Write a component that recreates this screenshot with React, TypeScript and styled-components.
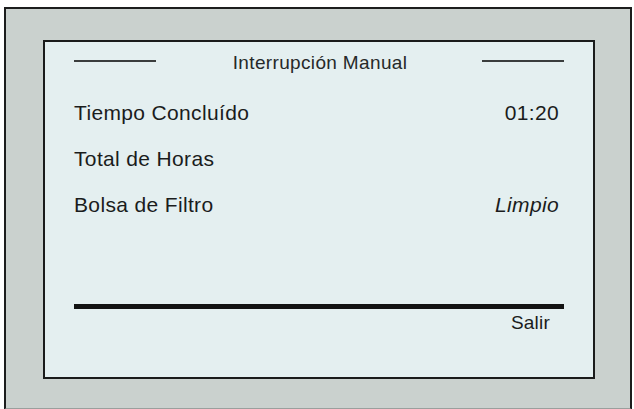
import styled, { createGlobalStyle } from 'styled-components';

const GlobalStyle = createGlobalStyle`
    html, body {
        margin: 0;
        padding: 0;
        background: #ffffff;
        overflow: hidden;
    }
    body {
        font-family: 'Liberation Sans', Arial, sans-serif;
        color: #1a1c1c;
    }
`;

const Frame = styled.div`
    box-sizing: border-box;
    width: 628px;
    height: 403px;
    margin: 7px 0 0 4px;
    padding: 31px 35px 0 37px;
    border: 2px solid #1c1d1d;
    border-bottom-color: #9a9f9d;
    background: #cad1ce;
`;

const Screen = styled.div`
    box-sizing: border-box;
    width: 552px;
    height: 339px;
    display: flex;
    flex-direction: column;
    padding: 10px 29px 43px;
    border: 2px solid #1a1b1b;
    background: #e4eff0;
`;

const Header = styled.div`
    display: flex;
    align-items: center;
    justify-content: space-between;
    height: 22px;
`;

const Rule = styled.span`
    width: 82px;
    height: 1.5px;
    margin-bottom: 4px;
    background: #3a3d3d;
`;

const Title = styled.span`
    font-size: 19px;
    line-height: 22px;
    letter-spacing: 0.35px;
    color: #262929;
    margin-left: 2px;
`;

const Rows = styled.div`
    display: flex;
    flex-direction: column;
    margin-top: 16px;
`;

const Row = styled.div`
    display: flex;
    justify-content: space-between;
    padding-right: 5px;
    font-size: 21px;
    line-height: 46px;
    letter-spacing: 0.35px;
`;

const Value = styled.span<{ $italic?: boolean }>`
    font-style: ${(p) => (p.$italic ? 'italic' : 'normal')};
`;

const Footer = styled.div`
    margin-top: auto;
    display: flex;
    flex-direction: column;
    align-items: flex-end;
    gap: 3px;
`;

const ThickRule = styled.div`
    align-self: stretch;
    height: 5px;
    background: #121313;
`;

const SoftKey = styled.span`
    font-size: 19px;
    line-height: 22px;
    letter-spacing: 0.2px;
    margin-right: 14px;
`;

const rows = [
    { label: 'Tiempo Concluído', value: '01:20' },
    { label: 'Total de Horas', value: '' },
    { label: 'Bolsa de Filtro', value: 'Limpio', italic: true },
];

export default function App() {
    return (
        <>
            <GlobalStyle />
            <Frame>
                <Screen>
                    <Header>
                        <Rule />
                        <Title>Interrupción Manual</Title>
                        <Rule />
                    </Header>

                    <Rows>
                        {rows.map((row) => (
                            <Row key={row.label}>
                                <span>{row.label}</span>
                                <Value $italic={row.italic}>{row.value}</Value>
                            </Row>
                        ))}
                    </Rows>

                    <Footer>
                        <ThickRule />
                        <SoftKey>Salir</SoftKey>
                    </Footer>
                </Screen>
            </Frame>
        </>
    );
}
